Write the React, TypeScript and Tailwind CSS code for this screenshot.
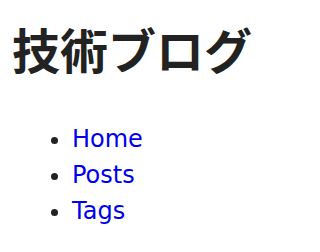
export default function App() {
  const links = ['Home', 'Posts', 'Tags'];
  return (
    <div className="px-3 pt-3 text-[24px] leading-[1.5] text-[#222] font-['DejaVu_Sans','Noto_Sans_CJK_JP',sans-serif]">
      <h1 className="text-[48px] font-bold leading-[1.5] font-['Noto_Sans_CJK_JP',sans-serif]">技術ブログ</h1>
      <ul className="mt-[37px] list-disc pl-[60px]">
        {links.map((l) => (
          <li key={l}>
            <a href="#" className="text-[#0000ee]">{l}</a>
          </li>
        ))}
      </ul>
    </div>
  );
}
